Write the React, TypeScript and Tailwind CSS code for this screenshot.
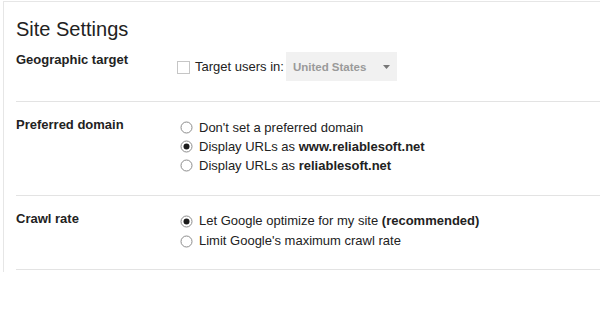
import type { ReactNode } from "react";

function Radio({ checked }: { checked?: boolean }) {
  return (
    <svg width="13" height="13" viewBox="0 0 13 13" className="shrink-0">
      <circle cx="6.5" cy="6.5" r="5.5" fill="#fff" stroke="#8c8c8c" strokeWidth="1" />
      {checked && <circle cx="6.5" cy="6.5" r="3" fill="#1c1c1c" />}
    </svg>
  );
}

function Option({ checked, children }: { checked?: boolean; children: ReactNode }) {
  return (
    <label className="flex items-center gap-[6px] pl-[3px]">
      <Radio checked={checked} />
      <span>{children}</span>
    </label>
  );
}

export default function App() {
  return (
    <div
      className="h-[314px] w-[600px] bg-white text-[#222]"
      style={{ fontFamily: '"Liberation Sans", Arial, sans-serif' }}
    >
      <div className="ml-[3px] mt-[1px] border-l border-t border-[#e6e6e6] pb-[2px] pl-[12px] pt-[15px]">
        <h1 className="text-[20px] leading-[24px]">Site Settings</h1>

        <div className="mt-[11px] flex border-b border-[#e3e3e3] pb-[20px]">
          <div className="w-[161px] text-[13px] font-bold leading-[16px]">Geographic target</div>
          <div className="flex h-[29px] items-center text-[13px] leading-[16px]">
            <span className="mt-[2px] h-[13px] w-[13px] border border-[#c6c6c6] bg-white" />
            <span className="ml-[5px]">Target users in:</span>
            <div className="ml-[2px] flex h-[29px] w-[111px] items-center justify-between bg-[#f1f1f1] pl-[7px] pr-[7px]">
              <span className="text-[11.5px] font-bold text-[#9a9a9a]">United States</span>
              <svg width="7" height="4" viewBox="0 0 7 4">
                <path d="M0 0h7L3.5 4z" fill="#777" />
              </svg>
            </div>
          </div>
        </div>

        <div className="flex border-b border-[#e3e3e3] pb-[20px] pt-[15px]">
          <div className="w-[161px] text-[13px] font-bold leading-[16px]">Preferred domain</div>
          <div className="mt-[1px] flex flex-col text-[13px] leading-[19px]">
            <Option>Don&apos;t set a preferred domain</Option>
            <Option checked>
              Display URLs as <b>www.reliablesoft.net</b>
            </Option>
            <Option>
              Display URLs as <b>reliablesoft.net</b>
            </Option>
          </div>
        </div>

        <div className="flex border-b border-[#e3e3e3] pb-[18px] pt-[15px]">
          <div className="w-[161px] text-[13px] font-bold leading-[16px]">Crawl rate</div>
          <div className="flex flex-col text-[13px] leading-[20px]">
            <Option checked>
              Let Google optimize for my site <b>(recommended)</b>
            </Option>
            <Option>Limit Google&apos;s maximum crawl rate</Option>
          </div>
        </div>
      </div>
    </div>
  );
}
